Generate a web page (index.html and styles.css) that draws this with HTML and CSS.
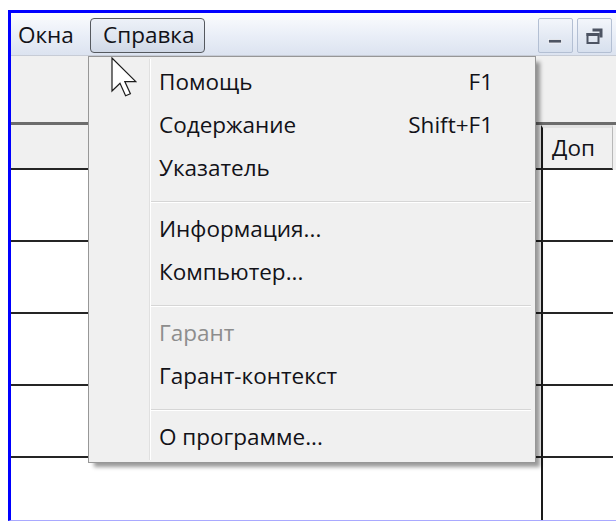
FILE: index.html
```html
<!DOCTYPE html>
<html lang="ru">
<head>
<meta charset="utf-8">
<title>Справка</title>
<link rel="stylesheet" href="styles.css">
</head>
<body>
<div class="window">
  <div class="menubar">
    <span class="mb-item mb-plain">Окна</span>
    <span class="mb-item mb-open">Справка</span>
    <div class="wbtns">
      <span class="wbtn">
        <svg width="35" height="35" viewBox="0 0 35 35"><rect x="10.5" y="21.5" width="13" height="3.5" fill="#4d5463" stroke="#f4f6fa" stroke-width="0.8"/></svg>
      </span>
      <span class="wbtn">
        <svg width="35" height="35" viewBox="0 0 35 35">
          <path d="M15.5 10.5h10v9h-3v-6h-7z" fill="#4d5463"/>
          <rect x="10.5" y="16" width="11" height="9" fill="none" stroke="#4d5463" stroke-width="2"/>
          <rect x="9.5" y="15" width="13" height="3" fill="#4d5463"/>
        </svg>
      </span>
      <span class="wbtn"></span>
    </div>
  </div>
  <div class="toolbar"></div>
  <div class="grid">
    <div class="cell head"></div><div class="cell head col-extra"><span class="head-label">Доп</span></div><div class="cell head rest"></div>
    <div class="cell"></div><div class="cell col-extra"></div><div class="cell rest"></div>
    <div class="cell"></div><div class="cell col-extra"></div><div class="cell rest"></div>
    <div class="cell"></div><div class="cell col-extra"></div><div class="cell rest"></div>
    <div class="cell"></div><div class="cell col-extra"></div><div class="cell rest"></div>
    <div class="cell"></div><div class="cell col-extra"></div><div class="cell rest"></div>
  </div>

  <div class="dropdown">
    <div class="gutter"></div>
    <ul class="items">
      <li class="item"><span>Помощь</span><span class="key">F1</span></li>
      <li class="item"><span>Содержание</span><span class="key">Shift+F1</span></li>
      <li class="item"><span>Указатель</span></li>
      <li class="sep"></li>
      <li class="item"><span>Информация...</span></li>
      <li class="item"><span>Компьютер...</span></li>
      <li class="sep"></li>
      <li class="item disabled"><span>Гарант</span></li>
      <li class="item"><span>Гарант-контекст</span></li>
      <li class="sep"></li>
      <li class="item"><span>О программе...</span></li>
    </ul>
  </div>

  <svg class="cursor" width="26" height="42" viewBox="0 0 13 21">
    <path d="M0.5 0.5V17L4.5 13.1L7.3 19.4L9.7 18.4L6.9 12.3H12.4Z" fill="#fff" stroke="#1c1c1c" stroke-width="0.6" stroke-linejoin="miter"/>
  </svg>
</div>
</body>
</html>
```

FILE: styles.css
```css
html, body {
  margin: 0;
  padding: 0;
  overflow: hidden;
  background: #fff;
}

body {
  width: 616px;
  height: 521px;
  font-family: "Open Sans", "Noto Sans", sans-serif;
  font-size: 22.5px;
  color: #121218;
}

.window {
  position: relative;
  box-sizing: border-box;
  width: 643px;
  height: 511px;
  margin: 10px 0 0 8px;
  border-top: 3px solid #0000ff;
  border-left: 3px solid #0000ff;
  border-bottom: 1px solid #a9a9ff;
  overflow: hidden;
  background: #fff;
}

/* menu bar */
.menubar {
  display: flex;
  align-items: flex-start;
  box-sizing: border-box;
  height: 43px;
  padding-top: 5px;
  background: linear-gradient(#fbfcfe, #e9eef7 55%, #dce3f0);
  border-bottom: 1px solid #c7ccd6;
}

.mb-item {
  display: flex;
  align-items: center;
  box-sizing: border-box;
  height: 35px;
  line-height: 1;
  white-space: nowrap;
}

.mb-plain {
  width: 79px;
  padding-left: 7px;
}

.mb-open {
  width: 115px;
  padding-left: 12px;
  border: 1px solid #55595f;
  border-radius: 4px;
  background: linear-gradient(#edf1f8, #dde4ef 60%, #d0d8e6);
}

.wbtns {
  display: flex;
  gap: 4px;
  margin-left: auto;
}

.wbtn {
  display: block;
  box-sizing: border-box;
  width: 35px;
  height: 35px;
  border: 1px solid #b3bfd3;
  border-radius: 2px;
  background: linear-gradient(#f3f6fb, #e3e9f3 55%, #d7e0ee);
}

.wbtn svg {
  display: block;
  margin: -1px;
}

/* toolbar strip */
.toolbar {
  height: 66px;
  background: #f0f0f0;
  border-bottom: 3px solid #6c6c6c;
}

/* table */
.grid {
  display: grid;
  grid-template-columns: 530px 72px 1fr;
  grid-template-rows: 45px repeat(5, 72px);
}

.cell {
  border-bottom: 2px solid #252525;
  background: #fff;
}

.cell.head {
  background: #f0f0f0;
}

.cell.rest {
  border-bottom: none;
}

.col-extra {
  border-left: 2px solid #1a1a1a;
}

.head.col-extra {
  display: flex;
  align-items: center;
  padding-left: 9px;
  border-top: 3px solid #e2e2e2;
  border-right: 1px solid #b8b8b8;
}

.head-label {
  line-height: 1;
}

/* dropdown menu */
.dropdown {
  position: absolute;
  left: 77px;
  top: 43px;
  box-sizing: border-box;
  width: 448px;
  height: 407px;
  display: flex;
  padding: 2px;
  background: #f0f0f0;
  border: 1px solid #979797;
  box-shadow: 5px 5px 4px -1px rgba(0, 0, 0, 0.4);
}

.gutter {
  width: 58px;
  border-right: 1px solid #e0e0e0;
}

.items {
  flex: 1;
  list-style: none;
  margin: 0;
  padding: 2px 40px 0 8px;
  border-left: 1px solid #fff;
}

.item {
  display: flex;
  justify-content: space-between;
  align-items: center;
  height: 43px;
  line-height: 1;
  white-space: nowrap;
}

.item.disabled {
  color: #8d8d8d;
}

.sep {
  box-sizing: border-box;
  height: 2px;
  margin: 11px -38px 5px -8px;
  border-top: 1px solid #d6d6d6;
  border-bottom: 1px solid #fff;
}

.cursor {
  position: absolute;
  left: 100px;
  top: 44px;
}
```
